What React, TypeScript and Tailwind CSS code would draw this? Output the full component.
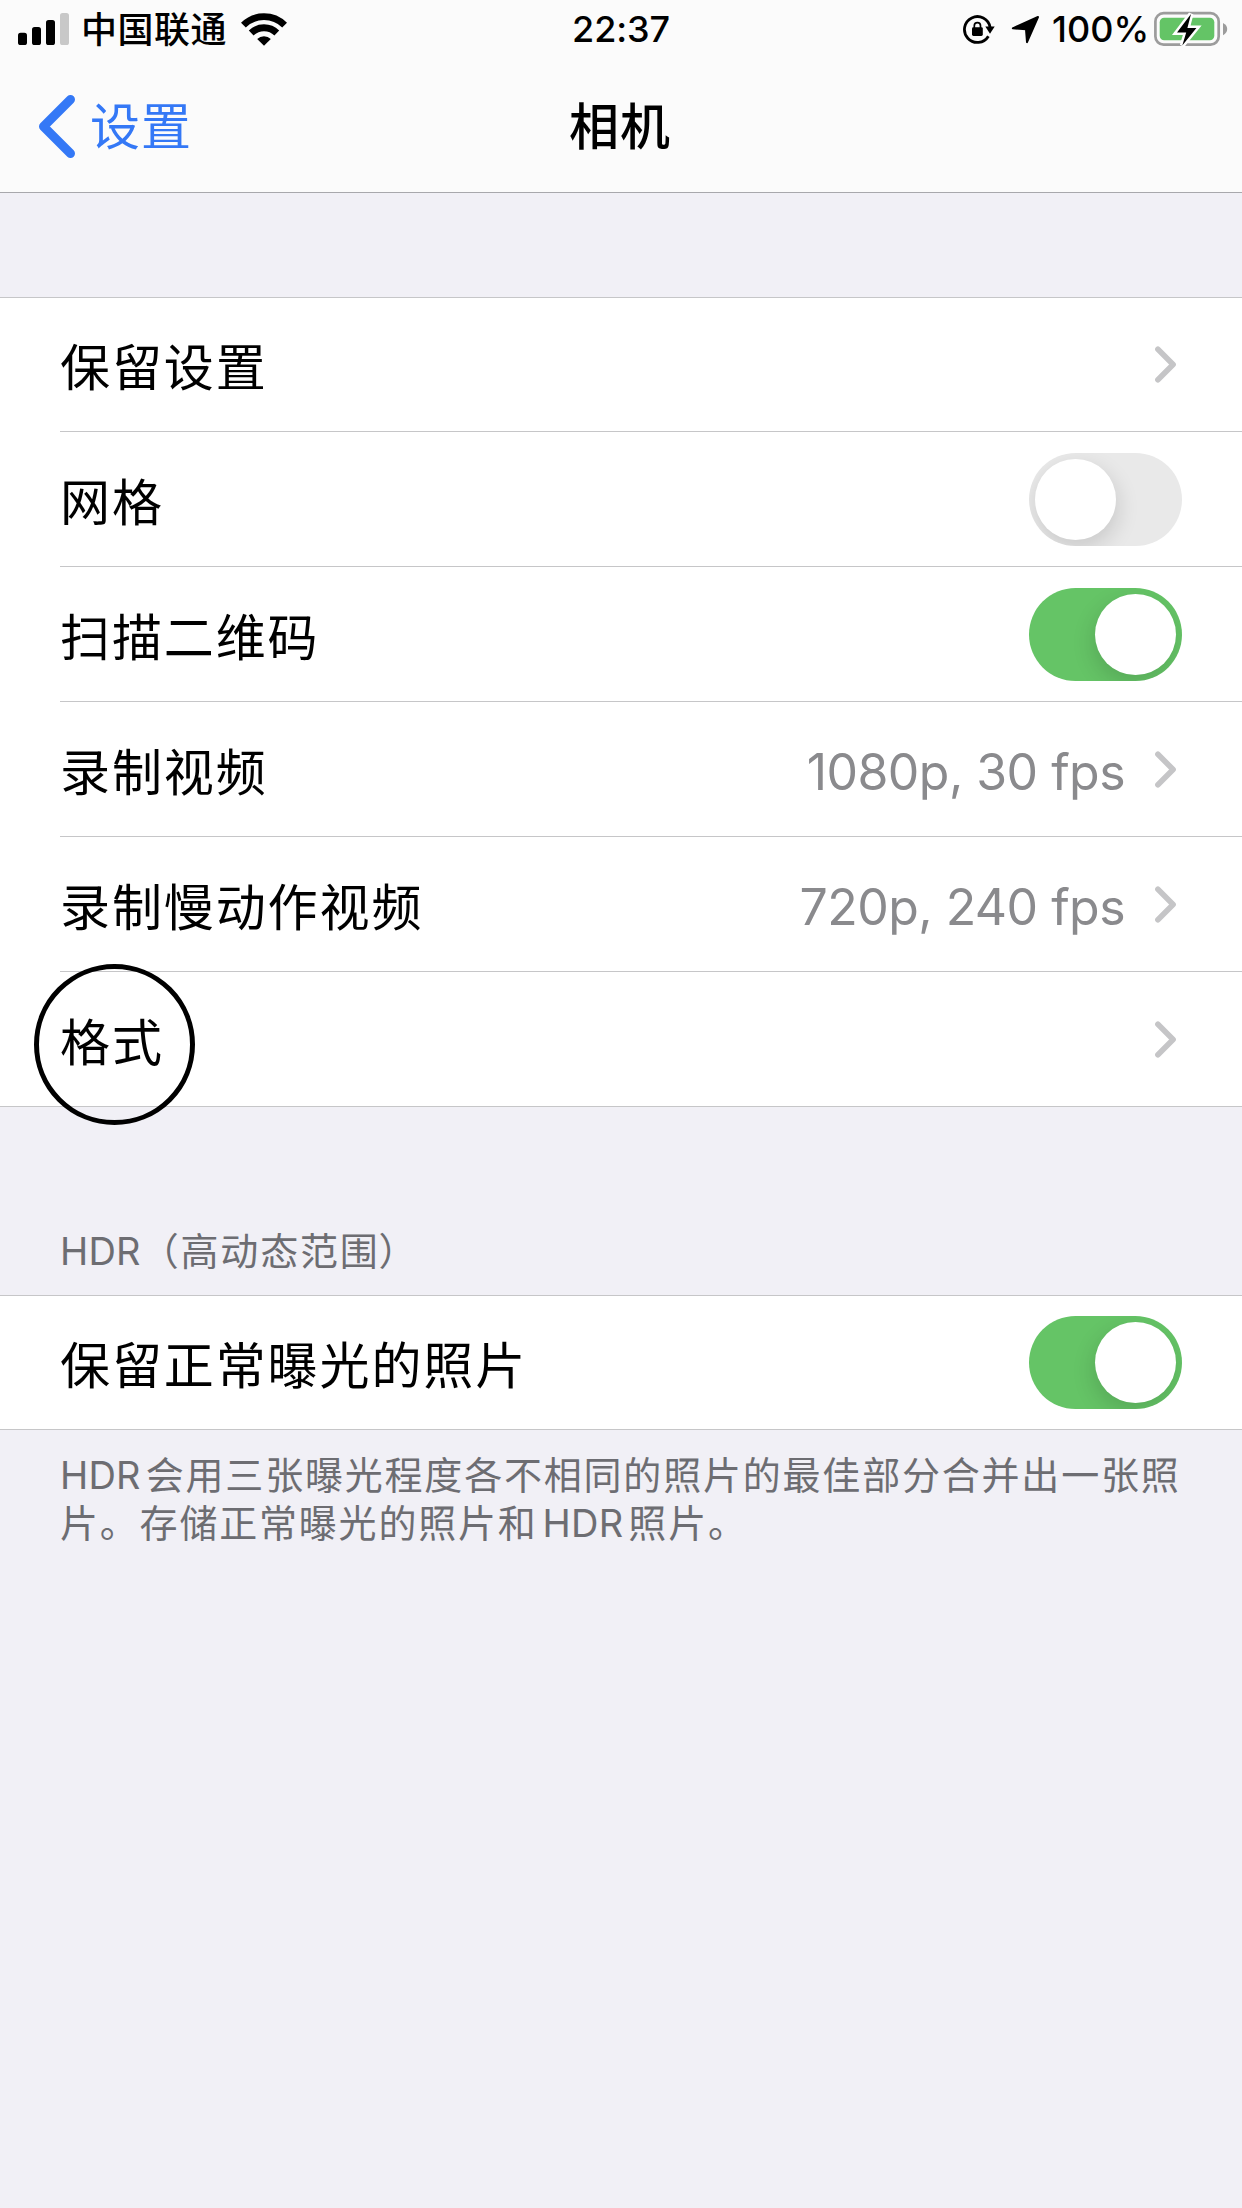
import { useState } from "react";
import clsx from "clsx";

interface RowProps {
  label: string;
  value?: string;
  highlighted?: boolean;
  first?: boolean;
  checked?: boolean;
}

const SignalIcon = () => (
  <svg className="h-[60px] w-[51px]" viewBox="18 0 51 60">
    <rect x="18" y="32.7" width="9" height="12.3" rx="2.6" />
    <rect x="32" y="27" width="9" height="18" rx="2.6" />
    <rect x="46" y="20" width="9" height="25" rx="2.6" />
    <rect x="60" y="13" width="9" height="32" rx="2.6" fill="#c8c8c8" />
  </svg>
);

const WifiIcon = () => (
  <svg className="h-[60px] w-[46px]" viewBox="241 0 46 60">
    <g fill="none" stroke="#000" strokeWidth="6.8">
      <path d="M243.4 25.2A29.2 29.2 0 0 1 284.6 25.2" />
      <path d="M251.2 33A18.2 18.2 0 0 1 276.8 33" />
    </g>
    <path d="M264 45.8L257.2 39A9.6 9.6 0 0 1 270.8 39Z" />
  </svg>
);

const RotationLockIcon = () => (
  <svg className="h-[60px] w-[32px]" viewBox="963 0 32 60">
    <path
      d="M988.4 36.2A12.9 12.9 0 1 1 990.1 27.4"
      fill="none"
      stroke="#000"
      strokeWidth="2.8"
    />
    <path d="M985.3 26.6H994.7L990 33.8Z" />
    <rect x="972" y="27.2" width="10.8" height="8.8" rx="1.4" />
    <path
      d="M974.3 28V25.8A3.1 3.1 0 0 1 980.5 25.8V28"
      fill="none"
      stroke="#000"
      strokeWidth="1.7"
    />
  </svg>
);

const LocationIcon = () => (
  <svg className="h-[60px] w-[29px]" viewBox="1011 0 29 60">
    <path
      d="M1012.8 28.3L1038 17L1027 42.2L1026 29.3Z"
      stroke="#000"
      strokeWidth="2"
      strokeLinejoin="round"
    />
  </svg>
);

const BatteryIcon = () => (
  <svg className="h-[60px] w-[74px]" viewBox="1154 0 74 60">
    <rect
      x="1155.4"
      y="13.2"
      width="63.3"
      height="31.5"
      rx="8.2"
      fill="none"
      stroke="#9c9c9c"
      strokeWidth="2.7"
    />
    <rect x="1159.7" y="17.7" width="54.6" height="22.5" rx="4.5" fill="#64c466" />
    <path d="M1223 23Q1227.2 25 1227.2 29T1223 35.2Z" fill="#9c9c9c" />
    <path
      d="M1191 14L1177 32.5H1186.2L1182.3 45.4L1196.4 28H1187.4Z"
      stroke="#fff"
      strokeWidth="5"
      paintOrder="stroke"
    />
  </svg>
);

const Chevron = () => (
  <svg
    className="h-[37px] w-[22px]"
    viewBox="0 0 22 37"
    fill="none"
    stroke="#c5c5c7"
    strokeWidth="5.6"
    strokeLinecap="round"
    strokeLinejoin="round"
  >
    <path d="M2.9 3.3L18.1 18.5L2.9 33.7" />
  </svg>
);

const Switch = ({ initial }: { initial: boolean }) => {
  const [on, setOn] = useState(initial);

  return (
    <button
      type="button"
      role="switch"
      aria-checked={on}
      onClick={() => setOn(!on)}
      className={clsx(
        "flex h-[93px] w-[153px] overflow-hidden rounded-full p-1.5",
        on ? "justify-end bg-[#65c466]" : "justify-start bg-[#e9e9e9]"
      )}
    >
      <span
        className={clsx(
          "size-[81px] rounded-full bg-white",
          on
            ? "shadow-[-2px_8px_22px_rgba(0,0,0,0.14)]"
            : "shadow-[2px_8px_22px_rgba(0,0,0,0.14)]"
        )}
      />
    </button>
  );
};

const Row = ({ label, value, highlighted, first, checked }: RowProps) => (
  <div className="flex bg-white pl-[60px]">
    <div
      className={clsx(
        "flex flex-1 items-center justify-between pr-[60px]",
        first ? "h-[133px]" : "h-[135px] border-t border-[#c6c6c8]"
      )}
    >
      <span className="relative pt-[7px] text-[50px] leading-[60px] tracking-[1.9px]">
        {label}
        {highlighted && (
          <span className="absolute -top-[42px] -left-[26px] size-[161px] rounded-full border-5 border-black" />
        )}
      </span>
      {checked === undefined ? (
        <span className="flex items-center pr-[5px]">
          {value && (
            <span className="mr-[30px] pt-1.5 text-[50px] leading-[60px] tracking-[-0.55px] text-[#8a8a8d]">
              {value}
            </span>
          )}
          <Chevron />
        </span>
      ) : (
        <Switch initial={checked} />
      )}
    </div>
  </div>
);

export default function App() {
  return (
    <div className="h-[2208px] w-[1242px] bg-[#f1f0f6] font-['Inter','Noto_Sans_CJK_SC',sans-serif] text-black">
      <header className="border-b border-[#a8a8ac] bg-[#fbfbfb]">
        <div className="flex h-[60px] justify-between pr-[14px] pl-[18px] text-[36px] leading-[58px] font-medium">
          <div className="flex flex-1">
            <SignalIcon />
            <span className="ml-[12px] w-[160px] pt-px tracking-[0.5px] whitespace-nowrap">
              中国联通
            </span>
            <WifiIcon />
          </div>
          <span className="-ml-1 tracking-[-0.1px]">22:37</span>
          <div className="flex flex-1 justify-end">
            <RotationLockIcon />
            <span className="ml-4">
              <LocationIcon />
            </span>
            <span className="ml-3 w-[96px] whitespace-nowrap">100%</span>
            <span className="ml-1.5">
              <BatteryIcon />
            </span>
          </div>
        </div>
        <nav className="flex h-[132px] items-center pl-[38px] text-[50px] leading-[60px]">
          <button type="button" className="flex flex-1 items-center text-[#3478f6]">
            <svg
              className="h-[64px] w-[38px]"
              viewBox="0 0 38 64"
              fill="none"
              stroke="currentColor"
              strokeWidth="9"
              strokeLinecap="round"
              strokeLinejoin="round"
            >
              <path d="M32.5 5.5L5.5 32.5L32.5 59.5" />
            </svg>
            <span className="ml-[14px] pt-0.5 tracking-[1px]">设置</span>
          </button>
          <h1 className="-ml-0.5 pt-0.5 font-medium tracking-[1px]">相机</h1>
          <span className="flex-1 pr-[38px]" />
        </nav>
      </header>

      <section className="mt-[104px] border-y border-[#c6c6c8]">
        <Row first label="保留设置" />
        <Row label="网格" checked={false} />
        <Row label="扫描二维码" checked />
        <Row label="录制视频" value="1080p, 30 fps" />
        <Row label="录制慢动作视频" value="720p, 240 fps" />
        <Row label="格式" highlighted />
      </section>

      <h2 className="mt-[120px] h-[68px] pl-[60px] text-[38px] leading-[48px] tracking-[1.8px] text-[#6d6d72]">
        <span className="tracking-[0.2px]">HDR</span>（高动态范围
        <span className="-ml-px">）</span>
      </h2>
      <section className="border-y border-[#c6c6c8]">
        <Row first label="保留正常曝光的照片" checked />
      </section>
      <p className="mt-[21px] pl-[60px] text-[38px] leading-[48px] tracking-[1.8px] whitespace-nowrap text-[#6d6d72]">
        <span className="mr-[5px] tracking-[0.2px]">HDR</span>
        会用三张曝光程度各不相同的照片的最佳部分合并出一张照
        <br />
        片。存储正常曝光的照片和
        <span className="mr-[5px] ml-[5px] tracking-[0.2px]">HDR</span>
        照片。
      </p>
    </div>
  );
}
